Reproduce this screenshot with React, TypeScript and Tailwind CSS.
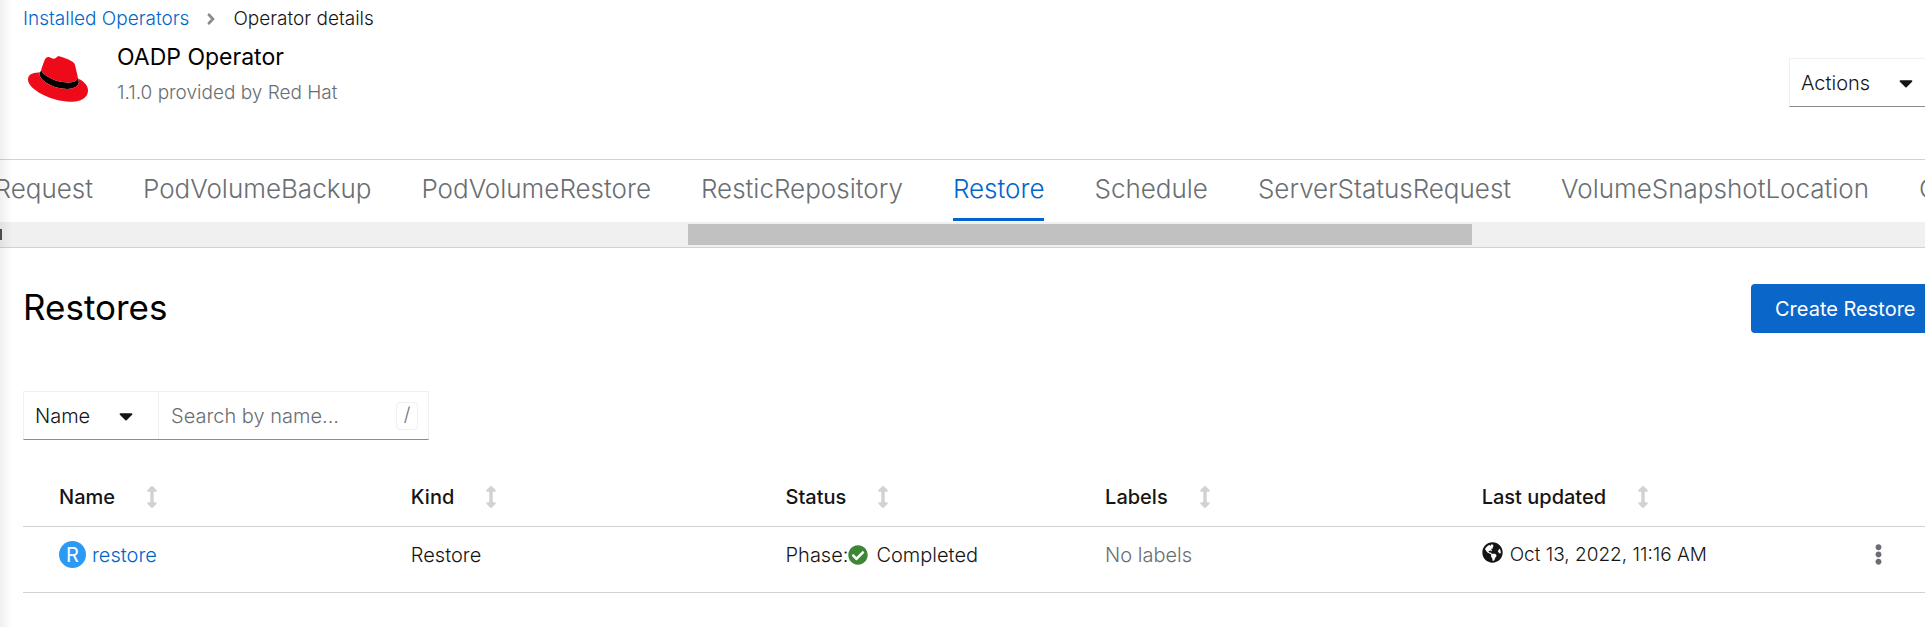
import {
  FaAngleRight,
  FaArrowsAltV,
  FaCaretDown,
  FaCheckCircle,
  FaEllipsisV,
  FaGlobeAmericas,
} from "react-icons/fa";

const tabs = [
  "PodVolumeBackup",
  "PodVolumeRestore",
  "ResticRepository",
  "Restore",
  "Schedule",
  "ServerStatusRequest",
  "VolumeSnapshotLocation",
];

const columns = [
  { label: "Name", width: "w-[18.5%]" },
  { label: "Kind", width: "w-[19.7%]" },
  { label: "Status", width: "w-[16.8%]" },
  { label: "Labels", width: "w-[19.8%]" },
  { label: "Last updated", width: "w-[20.3%]" },
];

function HatLogo() {
  return (
    <svg viewBox="0 62 512 388" className="h-[46px] w-[60px]" role="img" aria-label="Red Hat">
      <path
        fill="#000"
        d="M429 254.84c4.65 22 4.65 24.35 4.65 27.25 0 37.66-42.33 58.56-98 58.56-125.74.08-235.91-73.65-235.91-122.33a49.55 49.55 0 0 1 4.06-19.72l9.25-19.15c0 24.8 97.64 106.11 228.47 106.11 33.65 0 82.34-6.94 82.34-47a40 40 0 0 0-.8-10z"
      />
      <path
        fill="#ee0a18"
        d="M341.52 285.56c33.65 0 82.34-6.94 82.34-47 .22-6.74.86-1.82-20.88-96.24-4.62-19.15-8.68-27.84-42.31-44.65-26.09-13.34-82.92-35.37-99.73-35.37-15.66 0-20.2 20.17-38.87 20.17-18 0-31.31-15.06-48.12-15.06-16.14 0-26.66 11-34.78 33.62-27.5 77.55-26.28 74.27-26.12 78.27 0 24.8 97.64 106.11 228.47 106.11M429 254.84c4.65 22 4.65 24.35 4.65 27.25 0 37.66-42.33 58.56-98 58.56-125.74.08-235.91-73.65-235.91-122.33a49.55 49.55 0 0 1 4.06-19.72C58.56 200.86 0 208.93 0 260.63c0 84.67 200.63 189 359.49 189 121.79 0 152.51-55.08 152.51-98.58 0-34.2-29.59-73-82.93-96.24"
      />
    </svg>
  );
}

function PageHeader() {
  return (
    <header className="border-b border-[#d2d2d2] pb-[49px] pl-[23px]">
      <nav aria-label="Breadcrumb" className="flex h-[38px] items-center text-[19px]">
        <a href="#installed" className="text-[#0066cc]">
          Installed Operators
        </a>
        <FaAngleRight className="mx-[13px] size-[18px] text-[#8a8d90]" aria-hidden="true" />
        <span>Operator details</span>
      </nav>
      <div className="flex items-start justify-between pt-[2px]">
        <div className="flex">
          <div className="w-[94px] pl-[5px] pt-4">
            <HatLogo />
          </div>
          <div className="leading-[35px]">
            <h1 className="text-[23px] font-normal text-black">OADP Operator</h1>
            <p className="text-[19px] text-[#6a6e73]">1.1.0 provided by Red Hat</p>
          </div>
        </div>
        <button
          type="button"
          className="mt-[18px] flex h-[49px] w-[136px] items-center justify-between border border-r-0 border-[#f0f0f0] border-b-[#8a8d90] pl-[11px] pr-2 text-[20px]"
        >
          Actions
          <FaCaretDown className="size-[22px]" aria-hidden="true" />
        </button>
      </div>
    </header>
  );
}

function Tabs() {
  return (
    <div className="border-b border-[#d2d2d2]">
      <div role="tablist" className="flex gap-[50px] overflow-hidden whitespace-nowrap pb-px text-[26px] text-[#6a6e73]">
        <button type="button" role="tab" aria-selected="false" className="flex h-[61px] w-[93px] shrink-0 items-center justify-end border-b-3 border-transparent pb-[2px]">
          Request
        </button>
        {tabs.map((tab) => (
          <button
            key={tab}
            type="button"
            role="tab"
            aria-selected={tab === "Restore"}
            className={
              tab === "Restore"
                ? "h-[61px] shrink-0 border-b-3 border-[#0066cc] pb-[2px] text-[#0066cc]"
                : "h-[61px] shrink-0 border-b-3 border-transparent pb-[2px]"
            }
          >
            {tab}
          </button>
        ))}
        <button type="button" role="tab" aria-selected="false" className="h-[61px] shrink-0 border-b-3 border-transparent pb-[2px]">
          C
        </button>
      </div>
      <div className="flex h-[25px] items-center bg-[#f0f0f0]">
        <span className="h-[11px] w-[2px] bg-[#505050]" />
        <span className="ml-[35.65%] h-[21px] w-[40.7%] bg-[#c1c1c1]" />
      </div>
    </div>
  );
}

function FilterBar() {
  return (
    <form className="mt-[58px] flex h-[49px] w-[406px] border border-[#f0f0f0] border-b-[#8a8d90] text-[20px]">
      <label className="relative flex w-[135px] shrink-0 items-center border-r border-[#f0f0f0]">
        <span className="sr-only">Filter type</span>
        <select className="h-full w-full appearance-none bg-transparent pl-[11px]">
          <option>Name</option>
        </select>
        <FaCaretDown className="pointer-events-none absolute right-[21px] size-[22px]" aria-hidden="true" />
      </label>
      <input
        type="text"
        aria-label="Search by name"
        placeholder="Search by name..."
        className="min-w-0 flex-1 bg-transparent pl-3 placeholder:text-[#6a6e73] placeholder:opacity-100"
      />
      <kbd className="mr-[10px] flex h-7 w-[22px] items-center justify-center self-center rounded border border-[#f0f0f0] font-[Inter,sans-serif] text-[19px] text-[#6a6e73]">
        /
      </kbd>
    </form>
  );
}

function RestoreTable() {
  return (
    <table className="mt-7 w-full table-fixed border-collapse text-left text-[20px]">
      <thead>
        <tr className="h-[58px] border-b border-[#d2d2d2]">
          {columns.map((column) => (
            <th key={column.label} scope="col" className={`${column.width} pl-9 align-middle font-medium`}>
              <button type="button" className="flex items-center gap-[26px]">
                {column.label}
                <FaArrowsAltV className="size-[22px] text-[#d2d2d2]" aria-hidden="true" />
              </button>
            </th>
          ))}
          <th aria-label="Row actions" />
        </tr>
      </thead>
      <tbody>
        <tr className="h-[66px] border-b border-[#d2d2d2] leading-7 [&>td]:pl-9 [&>td]:pt-[14px] [&>td]:align-top">
          <td>
            <span className="flex items-center gap-[6px]">
              <span className="flex size-[27px] items-center justify-center rounded-full bg-[#2b9af3] font-normal text-white">R</span>
              <a href="#restore" className="text-[#0066cc]">
                restore
              </a>
            </span>
          </td>
          <td>Restore</td>
          <td>
            <span className="flex items-center">
              Phase:
              <FaCheckCircle className="mr-2 size-5 text-[#3e8635]" aria-hidden="true" />
              Completed
            </span>
          </td>
          <td className="text-[#6a6e73]">No labels</td>
          <td>
            <span className="flex items-center gap-[7px] whitespace-nowrap text-[19px]">
              <FaGlobeAmericas className="mb-1 size-[21px]" aria-hidden="true" />
              Oct 13, 2022, 11:16 AM
            </span>
          </td>
          <td>
            <button type="button" aria-label="Restore actions" className="flex h-7 items-center">
              <FaEllipsisV className="size-[21px] text-[#6a6e73]" aria-hidden="true" />
            </button>
          </td>
        </tr>
      </tbody>
    </table>
  );
}

export default function App() {
  return (
    <div className="relative min-h-screen overflow-hidden bg-white font-[Inter,sans-serif] font-light text-[#151515]">
      <div className="pointer-events-none absolute inset-y-0 left-0 w-3 bg-linear-to-r from-black/6 to-transparent" />
      <PageHeader />
      <Tabs />
      <main className="pl-[23px] pt-9">
        <div className="flex h-[49px] items-center justify-between">
          <h2 className="pb-[2px] text-[35px] font-normal text-black">Restores</h2>
          <button type="button" className="h-full w-[174px] rounded-l bg-[#0a66c8] pl-6 text-left text-[20px] font-normal text-white">
            Create Restore
          </button>
        </div>
        <FilterBar />
        <RestoreTable />
      </main>
    </div>
  );
}
